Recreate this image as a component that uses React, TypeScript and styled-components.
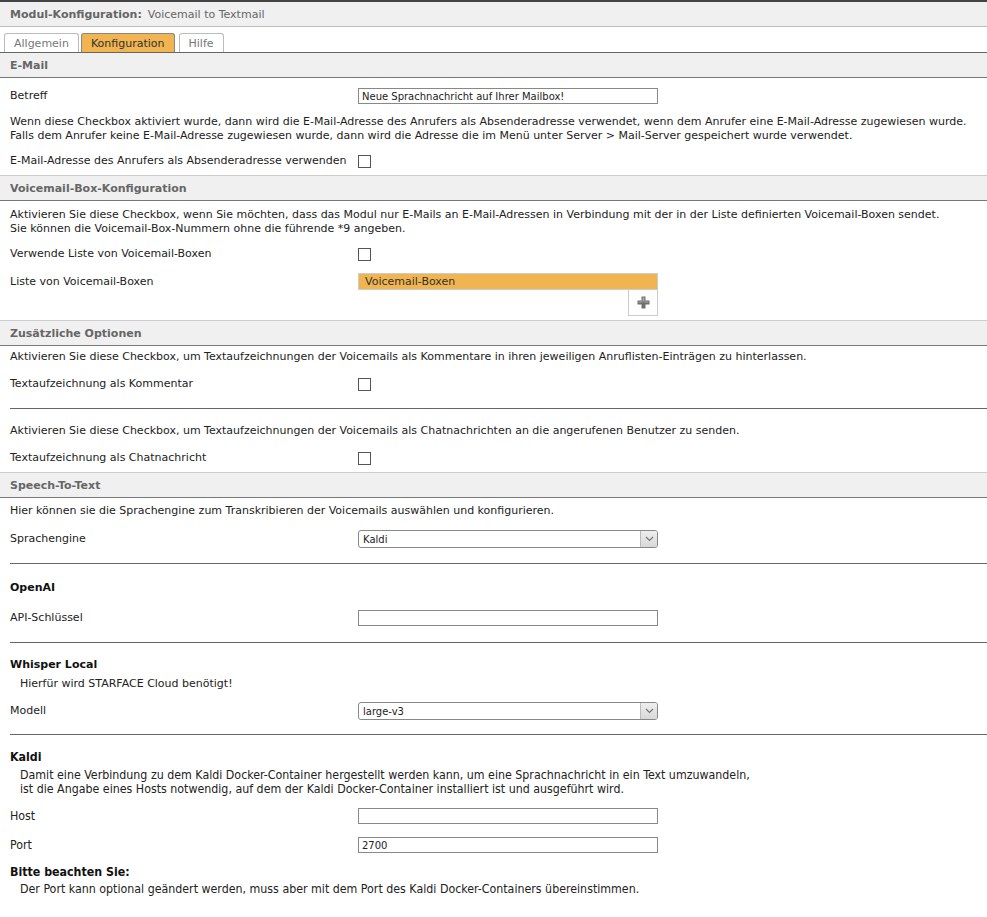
import React from 'react'
import styled, { createGlobalStyle } from 'styled-components'

const GlobalStyle = createGlobalStyle`
  body {
    margin: 0;
    background: #fff;
    font-family: "DejaVu Sans", Verdana, sans-serif;
    font-size: 11px;
    color: #222;
  }
`

const Page = styled.div`
  width: 987px;
`

const TitleBar = styled.div`
  display: flex;
  align-items: center;
  gap: 6px;
  height: 24px;
  padding: 0 10px;
  background: #f0f0f0;
  border-top: 2px solid #444;
  border-bottom: 1px solid #bbb;
  color: #666;
`

const TitleStrong = styled.span`
  font-weight: bold;
`

const TabBar = styled.div`
  display: flex;
  align-items: flex-end;
  gap: 2px;
  height: 25px;
  padding: 0 4px;
  border-bottom: 1px solid #666;
`

const Tab = styled.div<{ $active?: boolean }>`
  display: flex;
  align-items: center;
  height: 18px;
  padding: 0 9px;
  margin-right: ${(p) => (p.$active ? '2px' : '0')};
  border: 1px solid ${(p) => (p.$active ? '#888' : '#bbb')};
  border-bottom: none;
  border-radius: 3px 3px 0 0;
  background: ${(p) => (p.$active ? '#f0b450' : '#fff')};
  color: ${(p) => (p.$active ? '#333' : '#777')};
`

const SectionHeader = styled.div<{ $first?: boolean }>`
  display: flex;
  align-items: center;
  height: 24px;
  padding: 0 10px;
  background: #f0f0f0;
  border-top: ${(p) => (p.$first ? 'none' : '1px solid #ccc')};
  border-bottom: 1px solid #777;
  color: #666;
  font-weight: bold;
`

const SectionBody = styled.div<{ $top?: number; $bottom?: number }>`
  display: flex;
  flex-direction: column;
  padding: ${(p) => p.$top ?? 6}px 0 ${(p) => p.$bottom ?? 5}px 10px;
`

const Row = styled.div<{ $gap?: number; $start?: boolean }>`
  display: grid;
  grid-template-columns: 348px 300px;
  align-items: ${(p) => (p.$start ? 'start' : 'center')};
  min-height: 18px;
  margin-top: ${(p) => p.$gap ?? 0}px;
`

const Label = styled.div`
  line-height: 18px;
`

const Para = styled.p<{ $gap?: number; $indent?: boolean }>`
  margin: ${(p) => p.$gap ?? 0}px 0 0;
  padding-left: ${(p) => (p.$indent ? '10px' : '0')};
  line-height: 14px;
`

const SubHeading = styled.div<{ $gap?: number }>`
  margin-top: ${(p) => p.$gap ?? 0}px;
  line-height: 14px;
  font-weight: bold;
  color: #111;
`

const Divider = styled.hr<{ $gap?: number; $after?: number }>`
  margin: ${(p) => p.$gap ?? 15}px 0 ${(p) => p.$after ?? 15}px;
  border: none;
  border-top: 1px solid #666;
  height: 0;
`

const TextInput = styled.input`
  box-sizing: border-box;
  width: 300px;
  height: 16px;
  margin: 0;
  padding: 0 3px;
  border: 1px solid #888;
  font-family: "DejaVu Sans", Verdana, sans-serif;
  font-size: 10px;
  color: #222;
  outline: none;
`

const Checkbox = styled.span`
  box-sizing: border-box;
  display: block;
  width: 13px;
  height: 13px;
  border: 1px solid #555;
  background: #fff;
`

const SelectBox = styled.div`
  position: relative;
  box-sizing: border-box;
  display: flex;
  align-items: center;
  width: 300px;
  height: 18px;
  padding-left: 4px;
  border: 1px solid #888;
  border-radius: 3px;
  font-size: 10px;
  background: #fff;
`

const SelectArrow = styled.span`
  position: absolute;
  top: 0;
  right: 0;
  bottom: 0;
  width: 16px;
  display: flex;
  align-items: center;
  justify-content: center;
  border-left: 1px solid #bbb;
  border-radius: 0 2px 2px 0;
  background: linear-gradient(#eee, #d8d8d8);
`

const ListBox = styled.div`
  display: flex;
  flex-direction: column;
  align-items: flex-end;
`

const ListHead = styled.div`
  box-sizing: border-box;
  align-self: stretch;
  height: 17px;
  padding-left: 6px;
  line-height: 15px;
  background: #f0b450;
  border: 1px solid #ccc;
  color: #333;
`

const AddButton = styled.div`
  box-sizing: border-box;
  display: flex;
  align-items: center;
  justify-content: center;
  width: 30px;
  height: 26px;
  border: 1px solid #ccc;
  border-top: none;
  background: #fff;
`

const Condensed = styled.div`
  display: flex;
  flex-direction: column;
  font-family: "DejaVu Sans Condensed", "DejaVu Sans", sans-serif;
  font-size: 12.3px;
`

const Chevron = () => (
  <svg width="9" height="6" viewBox="0 0 9 6">
    <path d="M1 1 L4.5 4.5 L8 1" fill="none" stroke="#777" strokeWidth="1.2" />
  </svg>
)

const PlusIcon = () => (
  <svg width="13" height="13" viewBox="0 0 13 13">
    <path d="M4.5 0.5h4v4h4v4h-4v4h-4v-4h-4v-4h4z" fill="#6f6f6f" />
    <path d="M5.5 1.5h2v4h4v1h-4v-1h-2v-4zM1.5 5.5h4v1h-4z" fill="#a8a8a8" />
  </svg>
)

const Select: React.FC<{ value: string }> = ({ value }) => (
  <SelectBox>
    {value}
    <SelectArrow>
      <Chevron />
    </SelectArrow>
  </SelectBox>
)

export default function App() {
  return (
    <Page>
      <GlobalStyle />
      <TitleBar>
        <TitleStrong>Modul-Konfiguration:</TitleStrong>
        <span>Voicemail to Textmail</span>
      </TitleBar>
      <TabBar>
        <Tab>Allgemein</Tab>
        <Tab $active>Konfiguration</Tab>
        <Tab>Hilfe</Tab>
      </TabBar>

      <SectionHeader $first>E-Mail</SectionHeader>
      <SectionBody $top={9} $bottom={5}>
        <Row>
          <Label>Betreff</Label>
          <TextInput defaultValue="Neue Sprachnachricht auf Ihrer Mailbox!" />
        </Row>
        <Para $gap={10}>
          Wenn diese Checkbox aktiviert wurde, dann wird die E-Mail-Adresse des Anrufers als Absenderadresse verwendet, wenn dem Anrufer eine E-Mail-Adresse zugewiesen wurde.
          <br />
          Falls dem Anrufer keine E-Mail-Adresse zugewiesen wurde, dann wird die Adresse die im Menü unter Server &gt; Mail-Server gespeichert wurde verwendet.
        </Para>
        <Row $gap={9}>
          <Label>E-Mail-Adresse des Anrufers als Absenderadresse verwenden</Label>
          <Checkbox />
        </Row>
      </SectionBody>

      <SectionHeader>Voicemail-Box-Konfiguration</SectionHeader>
      <SectionBody $top={7} $bottom={4}>
        <Para>
          Aktivieren Sie diese Checkbox, wenn Sie möchten, dass das Modul nur E-Mails an E-Mail-Adressen in Verbindung mit der in der Liste definierten Voicemail-Boxen sendet.
          <br />
          Sie können die Voicemail-Box-Nummern ohne die führende *9 angeben.
        </Para>
        <Row $gap={9}>
          <Label>Verwende Liste von Voicemail-Boxen</Label>
          <Checkbox />
        </Row>
        <Row $gap={10} $start>
          <Label>Liste von Voicemail-Boxen</Label>
          <ListBox>
            <ListHead>Voicemail-Boxen</ListHead>
            <AddButton>
              <PlusIcon />
            </AddButton>
          </ListBox>
        </Row>
      </SectionBody>

      <SectionHeader>Zusätzliche Optionen</SectionHeader>
      <SectionBody $top={4} $bottom={5}>
        <Para>
          Aktivieren Sie diese Checkbox, um Textaufzeichnungen der Voicemails als Kommentare in ihren jeweiligen Anruflisten-Einträgen zu hinterlassen.
        </Para>
        <Row $gap={11}>
          <Label>Textaufzeichnung als Kommentar</Label>
          <Checkbox />
        </Row>
        <Divider />
        <Para>
          Aktivieren Sie diese Checkbox, um Textaufzeichnungen der Voicemails als Chatnachrichten an die angerufenen Benutzer zu senden.
        </Para>
        <Row $gap={11}>
          <Label>Textaufzeichnung als Chatnachricht</Label>
          <Checkbox />
        </Row>
      </SectionBody>

      <SectionHeader>Speech-To-Text</SectionHeader>
      <SectionBody $top={6} $bottom={20}>
        <Para>Hier können sie die Sprachengine zum Transkribieren der Voicemails auswählen und konfigurieren.</Para>
        <Row $gap={12}>
          <Label>Sprachengine</Label>
          <Select value="Kaldi" />
        </Row>
        <Divider $after={17} />
        <SubHeading>OpenAI</SubHeading>
        <Row $gap={14}>
          <Label>API-Schlüssel</Label>
          <TextInput />
        </Row>
        <Divider $gap={15} />
        <SubHeading>Whisper Local</SubHeading>
        <Para $gap={5} $indent>Hierfür wird STARFACE Cloud benötigt!</Para>
        <Row $gap={11}>
          <Label>Modell</Label>
          <Select value="large-v3" />
        </Row>
        <Divider $gap={14} />
        <Condensed>
          <SubHeading>Kaldi</SubHeading>
          <Para $gap={4} $indent>
            Damit eine Verbindung zu dem Kaldi Docker-Container hergestellt werden kann, um eine Sprachnachricht in ein Text umzuwandeln,
            <br />
            ist die Angabe eines Hosts notwendig, auf dem der Kaldi Docker-Container installiert ist und ausgeführt wird.
          </Para>
          <Row $gap={11}>
            <Label>Host</Label>
            <TextInput />
          </Row>
          <Row $gap={11}>
            <Label>Port</Label>
            <TextInput defaultValue="2700" />
          </Row>
          <SubHeading $gap={11}>Bitte beachten Sie:</SubHeading>
          <Para $gap={3} $indent>
            Der Port kann optional geändert werden, muss aber mit dem Port des Kaldi Docker-Containers übereinstimmen.
          </Para>
        </Condensed>
      </SectionBody>
    </Page>
  )
}
